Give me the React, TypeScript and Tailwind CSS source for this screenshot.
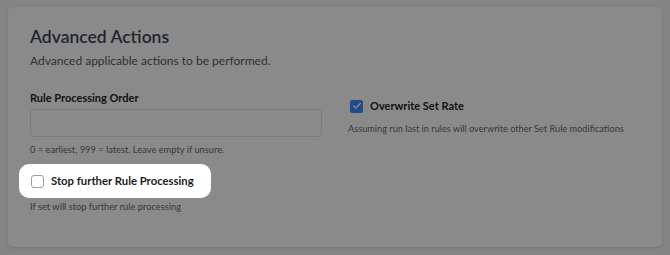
import { Check } from "lucide-react";

export default function App() {
  return (
    <div className="min-h-[255px] w-full bg-[#f4f4f4] pt-[7px] px-[8px] font-['Lato','Liberation_Sans',sans-serif]">
      <div className="h-[240px] rounded-[5px] bg-white px-[22px] pt-[18px] shadow-[0_1px_3px_rgba(0,0,0,0.12)]">
        <h2 className="text-[17.5px] leading-[24px] font-semibold text-[#3d4658]">
          Advanced Actions
        </h2>
        <p className="mt-[3px] text-[12px] leading-[18px] text-[#555b66]">
          Advanced applicable actions to be performed.
        </p>

        <div className="mt-[20px] grid grid-cols-2 gap-x-[26px]">
          <div>
            <label className="block text-[11px] leading-[16px] font-bold text-[#262626]">
              Rule Processing Order
            </label>
            <input
              type="text"
              className="mt-[3px] block h-[28px] w-full rounded-[4px] border border-[#e0e2e6] bg-white px-2 text-[12px] outline-none"
            />
            <p className="mt-[6px] text-[9.3px] leading-[14px] text-[#6a6a6a]">
              0 = earliest, 999 = latest. Leave empty if unsure.
            </p>

            {/* tour spotlight */}
            <div className="relative z-10 mt-[7px] -ml-[11px] flex h-[34px] w-[192px] items-center gap-[7px] rounded-[10px] bg-white pl-[12px] shadow-[0_0_0_9999px_rgba(0,0,0,0.46)]">
              <span className="h-[13px] w-[13px] rounded-[3px] border border-[#9a9da3] bg-white"></span>
              <span className="text-[11.3px] leading-[16px] font-bold text-[#1c1c1c]">
                Stop further Rule Processing
              </span>
            </div>
            <p className="mt-[2px] text-[9.3px] leading-[14px] text-[#6a6a6a]">
              If set will stop further rule processing
            </p>
          </div>

          <div className="pt-[8px]">
            <div className="ml-[2px] flex items-center gap-[7px]">
              <span className="flex h-[13px] w-[13px] items-center justify-center rounded-[2px] bg-[#3d8bff]">
                <Check size={10} strokeWidth={3.5} className="text-white" />
              </span>
              <span className="text-[11px] leading-[16px] font-bold text-[#262626]">
                Overwrite Set Rate
              </span>
            </div>
            <p className="mt-[8px] whitespace-nowrap text-[9.2px] leading-[14px] text-[#6a6a6a]">
              Assuming run last in rules will overwrite other Set Rule modifications
            </p>
          </div>
        </div>
      </div>
    </div>
  );
}
